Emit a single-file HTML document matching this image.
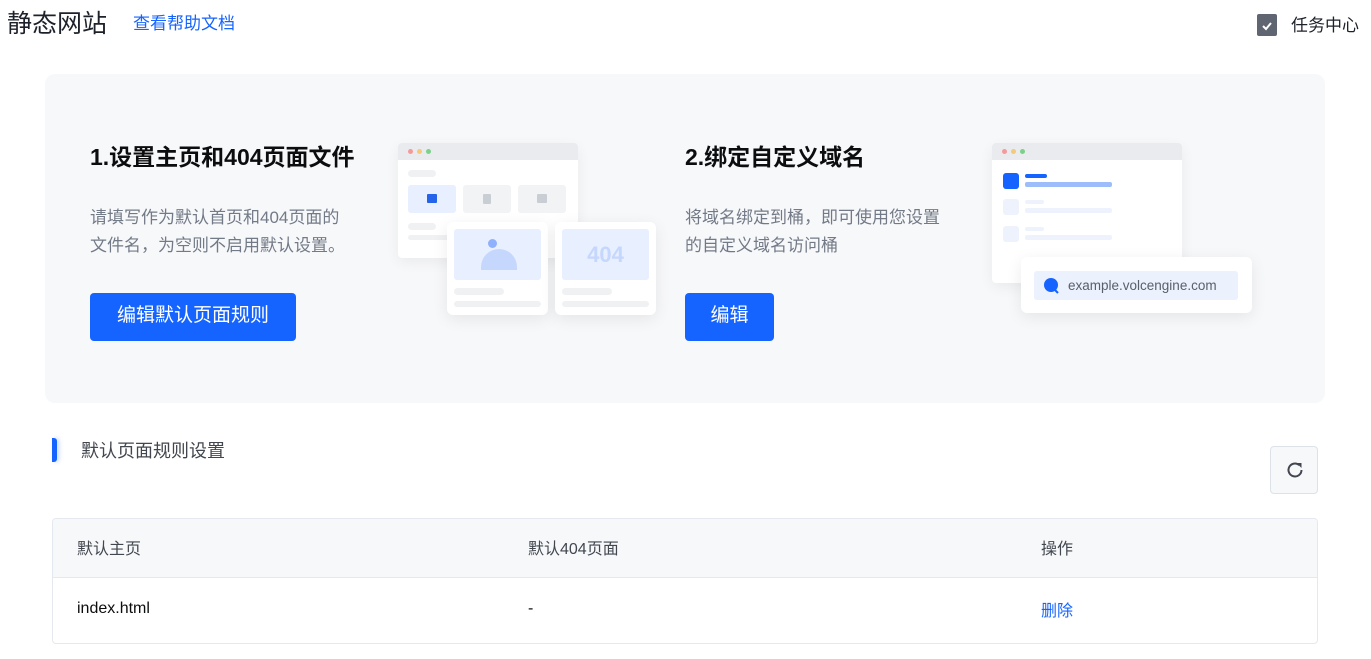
<!DOCTYPE html>
<html><head><meta charset="utf-8"><style>
*{margin:0;padding:0;box-sizing:border-box}
body{width:1371px;height:659px;background:#fff;font-family:"Liberation Sans","Noto Sans CJK SC",sans-serif;position:relative;overflow:hidden;color:#1d2129}
.a{position:absolute;white-space:nowrap}
.blue{color:#1664ff}
.banner{position:absolute;left:45px;top:74px;width:1280px;height:329px;background:#f7f8fa;border-radius:10px}
h2{position:absolute;font-size:23px;font-weight:bold;color:#0c0d0e;white-space:nowrap}
.desc{position:absolute;font-size:17px;line-height:28px;color:#737a87}
.btn{position:absolute;height:48px;background:#1664ff;color:#fff;border-radius:4px;font-size:19px;line-height:46px;text-align:center}
.win{position:absolute;background:#fff;border-radius:4px;box-shadow:0 4px 14px rgba(0,0,0,.06);overflow:hidden}
.bar{height:17px;background:#e9ebef;position:relative}
.dot{position:absolute;top:6px;width:5px;height:5px;border-radius:50%}
.card{position:absolute;background:#fff;border-radius:6px;box-shadow:0 4px 16px rgba(0,0,0,.08)}
.ln{position:absolute;border-radius:4px;background:#f0f1f3}
</style></head><body>
<div class="a" style="left:7px;top:4px;font-size:25px;color:#1d2129">静态网站</div>
<div class="a blue" style="left:133px;top:9px;font-size:17px">查看帮助文档</div>
<div class="a" style="left:1257px;top:14px;width:20px;height:22px;background:#5f6571;border-radius:2px"><svg width="20" height="22" viewBox="0 0 20 22"><path d="M6 12l3 3 5-6" stroke="#fff" stroke-width="2" fill="none"/></svg></div>
<div class="a" style="left:1291px;top:11px;font-size:17px;color:#1d2129">任务中心</div>

<div class="banner"></div>
<h2 style="left:90px;top:138px">1.设置主页和404页面文件</h2>
<div class="desc" style="left:90px;top:204px">请填写作为默认首页和404页面的<br>文件名，为空则不启用默认设置。</div>
<div class="btn" style="left:90px;top:293px;width:206px">编辑默认页面规则</div>

<h2 style="left:685px;top:138px">2.绑定自定义域名</h2>
<div class="desc" style="left:685px;top:204px">将域名绑定到桶，即可使用您设置<br>的自定义域名访问桶</div>
<div class="btn" style="left:685px;top:293px;width:89px">编辑</div>

<div class="win" style="left:398px;top:143px;width:180px;height:115px">
<div class="bar"><span class="dot" style="left:10px;background:#f59a9a"></span><span class="dot" style="left:19px;background:#f5c97a"></span><span class="dot" style="left:28px;background:#7cd18a"></span></div>
<div class="ln" style="left:10px;top:27px;width:28px;height:7px"></div>
<div style="position:absolute;left:10px;top:42px;width:48px;height:28px;background:#e8efff;border-radius:3px"><div style="position:absolute;left:19px;top:9px;width:10px;height:9px;background:#2563eb;border-radius:1px"></div></div>
<div style="position:absolute;left:65px;top:42px;width:48px;height:28px;background:#f2f3f5;border-radius:3px"><div style="position:absolute;left:20px;top:9px;width:8px;height:10px;background:#c9cdd4;border-radius:1px"></div></div>
<div style="position:absolute;left:120px;top:42px;width:48px;height:28px;background:#f2f3f5;border-radius:3px"><div style="position:absolute;left:19px;top:9px;width:10px;height:9px;background:#c9cdd4;border-radius:1px"></div></div>
<div class="ln" style="left:10px;top:80px;width:28px;height:7px"></div>
<div class="ln" style="left:10px;top:92px;width:60px;height:5px"></div>
</div>
<div class="card" style="left:447px;top:222px;width:101px;height:93px">
<div style="position:absolute;left:7px;top:7px;width:87px;height:51px;background:#e8efff;border-radius:3px">
<div style="position:absolute;left:34px;top:10px;width:9px;height:9px;border-radius:50%;background:#8fb1fb"></div>
<div style="position:absolute;left:27px;top:20px;width:36px;height:21px;background:#c6d7fd;border-radius:18px 18px 0 0"></div></div>
<div class="ln" style="left:7px;top:66px;width:50px;height:7px"></div>
<div class="ln" style="left:7px;top:79px;width:87px;height:6px"></div>
</div>
<div class="card" style="left:555px;top:222px;width:101px;height:93px">
<div style="position:absolute;left:7px;top:7px;width:87px;height:51px;background:#e8efff;border-radius:3px;color:#c6d7fd;font-weight:bold;font-size:22px;text-align:center;line-height:51px">404</div>
<div class="ln" style="left:7px;top:66px;width:50px;height:7px"></div>
<div class="ln" style="left:7px;top:79px;width:87px;height:6px"></div>
</div>

<div class="win" style="left:992px;top:143px;width:190px;height:140px">
<div class="bar"><span class="dot" style="left:10px;background:#f59a9a"></span><span class="dot" style="left:19px;background:#f5c97a"></span><span class="dot" style="left:28px;background:#7cd18a"></span></div>
<div style="position:absolute;left:11px;top:30px;width:16px;height:16px;background:#1664ff;border-radius:3px"></div>
<div style="position:absolute;left:33px;top:31px;width:22px;height:4px;background:#1664ff;border-radius:2px"></div>
<div style="position:absolute;left:33px;top:39px;width:87px;height:5px;background:#9dbdfa;border-radius:2px"></div>
<div style="position:absolute;left:11px;top:56px;width:16px;height:16px;background:#eef2fc;border-radius:3px"></div>
<div style="position:absolute;left:33px;top:57px;width:19px;height:4px;background:#eef2fc;border-radius:2px"></div>
<div style="position:absolute;left:33px;top:65px;width:87px;height:5px;background:#eef2fc;border-radius:2px"></div>
<div style="position:absolute;left:11px;top:83px;width:16px;height:16px;background:#eef2fc;border-radius:3px"></div>
<div style="position:absolute;left:33px;top:84px;width:19px;height:4px;background:#eef2fc;border-radius:2px"></div>
<div style="position:absolute;left:33px;top:92px;width:87px;height:5px;background:#eef2fc;border-radius:2px"></div>
</div>
<div class="card" style="left:1021px;top:257px;width:231px;height:56px">
<div style="position:absolute;left:13px;top:14px;width:204px;height:29px;background:#ebf1fd;border-radius:3px">
<svg style="position:absolute;left:9px;top:6px" width="18" height="18" viewBox="0 0 18 18"><circle cx="8" cy="8" r="7" fill="#1664ff"/><path d="M12 13l3 3" stroke="#1664ff" stroke-width="2"/></svg>
<span class="a" style="left:34px;top:7px;font-size:13.5px;color:#5a5f69">example.volcengine.com</span></div>
</div>

<div class="a" style="left:52px;top:438px;width:5px;height:24px;background:#1664ff;border-radius:0 3px 3px 0;box-shadow:2px 0 4px rgba(22,100,255,.25)"></div>
<div class="a" style="left:81px;top:437px;font-size:18px;color:#42464e">默认页面规则设置</div>
<div class="a" style="left:1270px;top:446px;width:48px;height:48px;background:#f6f8fa;border:1px solid #dde2e9;border-radius:4px">
<svg style="position:absolute;left:13px;top:12px" width="22" height="22" viewBox="0 0 22 22"><path d="M17.5 11a6.5 6.5 0 1 1-2.2-4.9" stroke="#42464e" stroke-width="2" fill="none"/><path d="M12.5 4h5v5z" fill="#42464e"/></svg></div>

<div class="a" style="left:52px;top:518px;width:1266px;height:126px;border:1px solid #e5e8ef;border-radius:4px;overflow:hidden">
<div style="height:59px;background:#f6f8fa;border-bottom:1px solid #e5e8ef"></div>
</div>
<div class="a" style="left:77px;top:535px;font-size:16px;color:#42464e">默认主页</div>
<div class="a" style="left:528px;top:535px;font-size:16px;color:#42464e">默认404页面</div>
<div class="a" style="left:1041px;top:535px;font-size:16px;color:#42464e">操作</div>
<div class="a" style="left:77px;top:600px;font-size:16px;color:#0c0d0e">index.html</div>
<div class="a" style="left:528px;top:600px;font-size:16px;color:#0c0d0e">-</div>
<div class="a blue" style="left:1041px;top:597px;font-size:16px">删除</div>
</body></html>
